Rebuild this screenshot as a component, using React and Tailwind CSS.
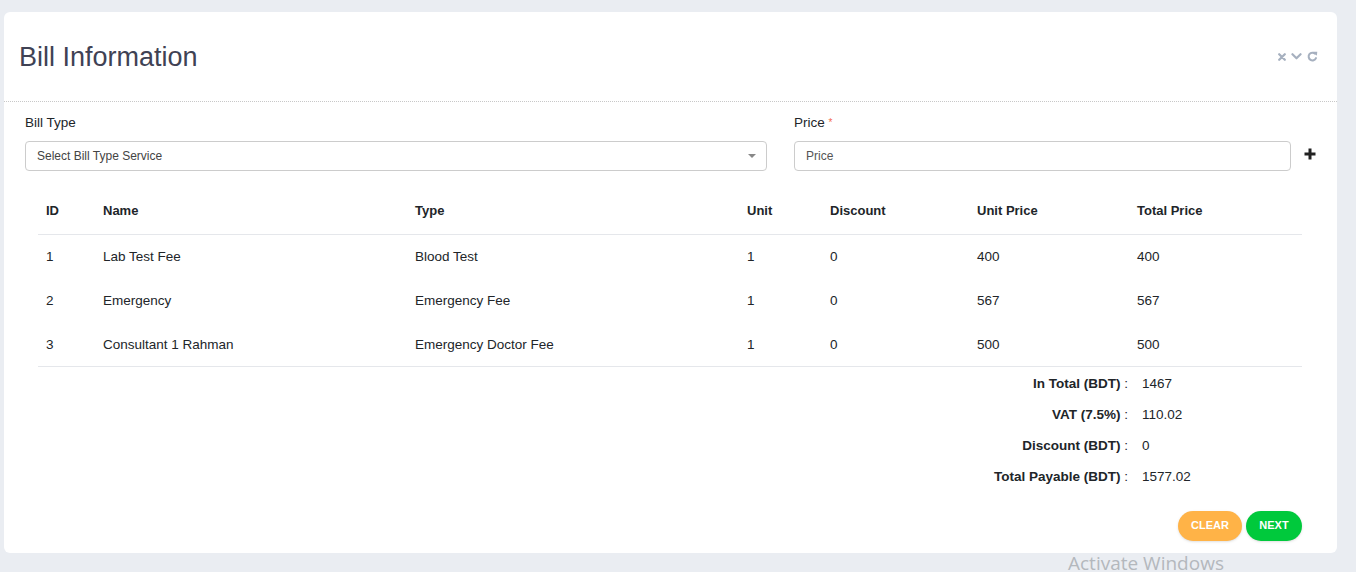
import React from "react";

const rows = [
  ["1", "Lab Test Fee", "Blood Test", "1", "0", "400", "400"],
  ["2", "Emergency", "Emergency Fee", "1", "0", "567", "567"],
  ["3", "Consultant 1 Rahman", "Emergency Doctor Fee", "1", "0", "500", "500"],
];

const summary = [
  ["In Total (BDT)", "1467"],
  ["VAT (7.5%)", "110.02"],
  ["Discount (BDT)", "0"],
  ["Total Payable (BDT)", "1577.02"],
];

const colW = ["w-[57px]", "w-[312px]", "w-[332px]", "w-[83px]", "w-[147px]", "w-[160px]", "w-[173px]"];
const headers = ["ID", "Name", "Type", "Unit", "Discount", "Unit Price", "Total Price"];

export default function App() {
  return (
    <div
      className="relative w-[1356px] h-[572px] bg-[#eaedf2] overflow-hidden pt-[12px] pl-[4px]"
      style={{ fontFamily: '"Liberation Sans", Arial, sans-serif' }}
    >
      <div className="w-[1333px] h-[541px] bg-white rounded-[6px] flex flex-col">
        {/* Header */}
        <div className="h-[90px] flex items-center justify-between pl-[15px] pr-[19px] border-b border-dotted border-[#c8c8c8]">
          <h1 className="text-[27px] text-[#3f4254] leading-none pt-[2px]">Bill Information</h1>
          <div className="flex items-center gap-[5px] text-[#a6b0bf]">
            <svg width="8" height="8" viewBox="0 0 10 10">
              <path d="M1.5 1.5 L8.5 8.5 M8.5 1.5 L1.5 8.5" stroke="currentColor" strokeWidth="2.8" strokeLinecap="round" />
            </svg>
            <svg width="11" height="9" viewBox="0 0 12 10">
              <path d="M1.5 2.5 L6 7 L10.5 2.5" stroke="currentColor" strokeWidth="2.4" fill="none" strokeLinecap="round" strokeLinejoin="round" />
            </svg>
            <svg width="11" height="11" viewBox="0 0 12 12">
              <path d="M9.8 7.8 A4.2 4.2 0 1 1 8.9 3" stroke="currentColor" strokeWidth="2.2" fill="none" strokeLinecap="round" />
              <path d="M6.8 0.8 L11.2 0.9 L10.8 5.2 Z" fill="currentColor" />
            </svg>
          </div>
        </div>

        {/* Form */}
        <div className="px-[21px] pt-[13px] flex items-start">
          <div className="w-[742px] flex flex-col">
            <label className="text-[13.5px] text-[#212529] leading-[16px] h-[16px]">Bill Type</label>
            <div className="mt-[10px] h-[30px] border border-[#cccccc] rounded-[4px] flex items-center justify-between pl-[11px] pr-[10px]">
              <span className="text-[12px] text-[#444]">Select Bill Type Service</span>
              <span className="w-0 h-0 border-l-[4px] border-r-[4px] border-t-[4px] border-l-transparent border-r-transparent border-t-[#888]" />
            </div>
          </div>
          <div className="ml-[27px] w-[497px] flex flex-col">
            <label className="text-[13.5px] text-[#212529] leading-[16px] h-[16px]">
              Price <span className="text-[#f46a4e] text-[10px] align-top">*</span>
            </label>
            <div className="mt-[10px] h-[30px] border border-[#cccccc] rounded-[4px] flex items-center pl-[11px]">
              <span className="text-[12px] text-[#555]">Price</span>
            </div>
          </div>
          <div className="ml-[13px] mt-[33px] flex items-center">
            <svg width="12" height="12" viewBox="0 0 12 12">
              <path d="M6 0.5 V11.5 M0.5 6 H11.5" stroke="#222" strokeWidth="3" />
            </svg>
          </div>
        </div>

        {/* Table */}
        <div className="ml-[34px] w-[1264px] mt-[16px]">
          <table className="w-full border-collapse text-[13.5px] text-[#212529] table-fixed">
            <colgroup>
              {colW.map((w, i) => (
                <col key={i} className={w} />
              ))}
            </colgroup>
            <thead>
              <tr className="h-[47px] border-b border-[#e5e7eb]">
                {headers.map((h) => (
                  <th key={h} className="text-left font-bold pl-[8px] pt-[1px] text-[13px]">
                    {h}
                  </th>
                ))}
              </tr>
            </thead>
            <tbody>
              {rows.map((r, i) => (
                <tr key={i} className={`h-[44px] ${i === rows.length - 1 ? "border-b border-[#e5e7eb]" : ""}`}>
                  {r.map((c, j) => (
                    <td key={j} className="pl-[8px] pt-[2px]">
                      {c}
                    </td>
                  ))}
                </tr>
              ))}
            </tbody>
          </table>

          {/* Summary */}
          <div className="flex flex-col pt-[2px]">
            {summary.map(([l, v]) => (
              <div key={l} className="h-[31px] flex items-center justify-end text-[13.5px] text-[#212529]">
                <span className="font-bold text-right">
                  {l} <span className="font-normal">:</span>
                </span>
                <span className="w-[174px] pl-[14px]">{v}</span>
              </div>
            ))}
          </div>

          <div className="flex justify-end gap-[4px] mt-[18px]">
            <button className="w-[64px] h-[30px] rounded-full bg-[#ffb347] text-white text-[11px] font-bold shadow-sm">
              CLEAR
            </button>
            <button className="w-[56px] h-[30px] rounded-full bg-[#00c93c] text-white text-[11px] font-bold shadow-sm">
              NEXT
            </button>
          </div>
        </div>
      </div>

      <div
        className="absolute left-[1068px] top-[551px] text-[19px] text-[#b4b8bd] leading-[24px]"
        style={{ fontFamily: '"Open Sans", sans-serif' }}
      >
        Activate Windows
      </div>
    </div>
  );
}
